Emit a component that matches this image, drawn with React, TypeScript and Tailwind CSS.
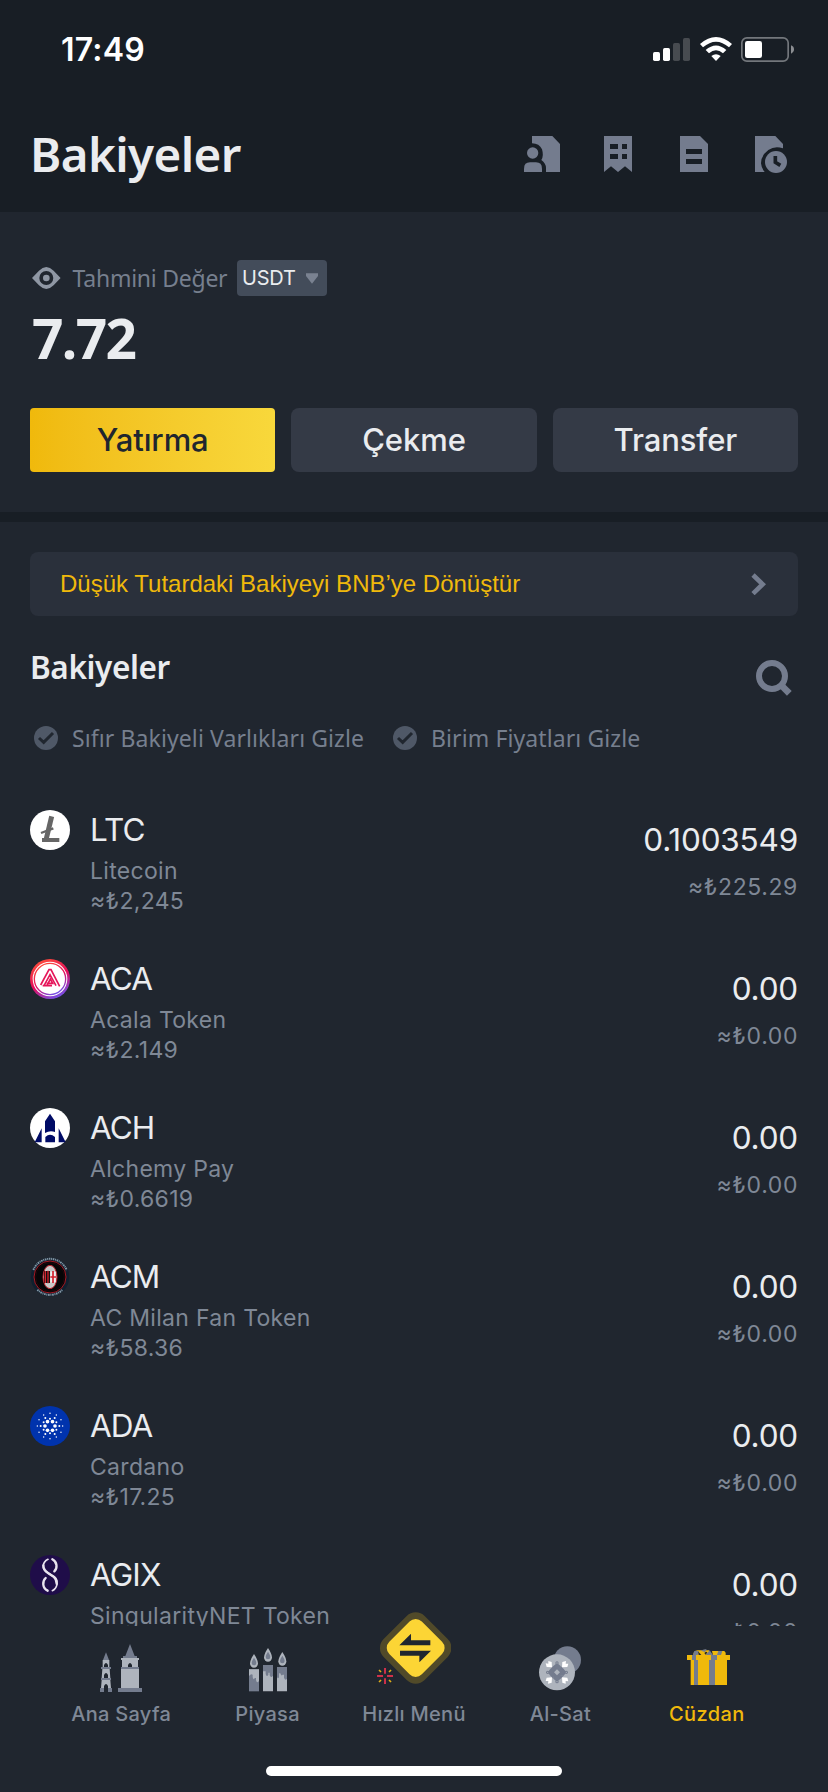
import type { ReactNode } from 'react'

type Coin = {
  symbol: string
  name: string
  price?: string
  amount: string
  value: string
  logo: ReactNode
}

const LtcLogo = () => (
  <svg viewBox="0 0 120 120" className="h-10 w-10">
    <circle cx="60" cy="60" r="60" fill="#fff" />
    <path d="M65 19 L48 90" stroke="#666" strokeWidth="15" />
    <path d="M36 90 H88" stroke="#666" strokeWidth="12" />
    <path d="M33 69 L70 55" stroke="#666" strokeWidth="7" />
  </svg>
)

const AcaLogo = () => (
  <svg viewBox="0 0 120 120" className="h-10 w-10">
    <defs>
      <linearGradient id="aca" x1="0.3" y1="0" x2="0.8" y2="1">
        <stop offset="0" stopColor="#ff4c3b" />
        <stop offset="0.5" stopColor="#e40c5b" />
        <stop offset="1" stopColor="#645aff" />
      </linearGradient>
    </defs>
    <circle cx="60" cy="60" r="60" fill="url(#aca)" />
    <circle cx="60" cy="60" r="52" fill="#fff" />
    <circle cx="60" cy="60" r="47" fill="none" stroke="url(#aca)" strokeWidth="4" />
    <path
      d="M32 78 L57 32 L63 32 L89 82 M42 80 L60 47 L78 80 M51 79 L61 60 L68 73 L50 73 M38 80 H66"
      fill="none"
      stroke="#e5175a"
      strokeWidth="5"
    />
  </svg>
)

const AchLogo = () => (
  <svg viewBox="0 0 120 120" className="h-10 w-10">
    <circle cx="60" cy="60" r="60" fill="#fff" />
    <path d="M60 17 L75 40 V72 Q60 66 45 75 V40 Z" fill="#000b66" />
    <path d="M35 61 V103 H14 Z M86 61 V103 H107 Z" fill="#000b66" />
    <path d="M46 103 V87 Q60 74 75 87 V103 Z" fill="#000b66" />
  </svg>
)

const AcmLogo = () => (
  <svg viewBox="0 0 120 120" className="h-10 w-10">
    <circle cx="60" cy="60" r="58" fill="#10202f" />
    <circle cx="60" cy="60" r="48" fill="#050507" stroke="#a81823" strokeWidth="3" />
    <circle cx="60" cy="60" r="43" fill="none" stroke="#4a0d13" strokeWidth="1" />
    <path d="M10 39 A54 54 0 0 1 110 39" fill="none" stroke="#8395a3" strokeWidth="6" strokeDasharray="5 2 3 2" />
    <path d="M22 98 A54 54 0 0 0 98 98" fill="none" stroke="#8395a3" strokeWidth="6" strokeDasharray="5 2 3 2" />
    <ellipse cx="60" cy="60" rx="21" ry="35" fill="#c9c9c9" stroke="#c3202b" strokeWidth="3" />
    <path d="M42 42 H60 V78 H42 Z" fill="#111" />
    <path d="M46 42 V78 M54 41 V79" stroke="#d51f2c" strokeWidth="4" />
    <path d="M61 44 H77 V76 H61 Z" fill="#eee" />
    <path d="M69 42 V78 M61 60 H78" stroke="#d51f2c" strokeWidth="5" />
  </svg>
)

// dots on concentric rings: radius, dot size, count, start angle
const adaRings = [
  [15, 5.5, 6, 0],
  [22, 3, 6, 30],
  [28, 3, 6, 0],
  [38, 2.2, 12, 0],
]

const AdaLogo = () => (
  <svg viewBox="0 0 120 120" className="h-10 w-10">
    <circle cx="60" cy="60" r="60" fill="#0033ad" />
    {adaRings.map(([r, size, count, start], ring) =>
      Array(count)
        .fill('')
        .map((_, i) => {
          const a = ((start + (i * 360) / count) * Math.PI) / 180
          return (
            <circle key={`${ring}-${i}`} cx={60 + r * Math.cos(a)} cy={60 + r * Math.sin(a)} r={size} fill="#fff" />
          )
        }),
    )}
  </svg>
)

const AgixLogo = () => (
  <svg viewBox="0 0 120 120" className="h-10 w-10">
    <circle cx="60" cy="60" r="60" fill="#1f0d49" />
    <g fill="none" stroke="#e9e4ee" strokeLinecap="round">
      <path d="M54 13 C36 22 36 42 49 51 L72 65 C86 75 84 98 67 107" strokeWidth="5" />
      <path d="M40 31 C40 43 45 48 54 54 L72 66 C79 72 80 78 80 86" strokeWidth="7" />
      <path d="M67 13 C82 21 83 39 73 49" strokeWidth="7" />
      <path d="M47 69 C36 79 37 99 53 107" strokeWidth="7" />
    </g>
  </svg>
)

const coins: Coin[] = [
  { symbol: 'LTC', name: 'Litecoin', price: '≈₺2,245', amount: '0.1003549', value: '≈₺225.29', logo: <LtcLogo /> },
  { symbol: 'ACA', name: 'Acala Token', price: '≈₺2.149', amount: '0.00', value: '≈₺0.00', logo: <AcaLogo /> },
  { symbol: 'ACH', name: 'Alchemy Pay', price: '≈₺0.6619', amount: '0.00', value: '≈₺0.00', logo: <AchLogo /> },
  { symbol: 'ACM', name: 'AC Milan Fan Token', price: '≈₺58.36', amount: '0.00', value: '≈₺0.00', logo: <AcmLogo /> },
  { symbol: 'ADA', name: 'Cardano', price: '≈₺17.25', amount: '0.00', value: '≈₺0.00', logo: <AdaLogo /> },
  { symbol: 'AGIX', name: 'SingularityNET Token', amount: '0.00', value: '≈₺0.00', logo: <AgixLogo /> },
]

const StatusBar = () => (
  <div className="flex h-[100px] items-start justify-between pl-[61px] pr-[34px]">
    <span className="mt-[30px] text-[32px] font-semibold leading-[40px] tracking-[0.2px] text-white">17:49</span>
    <div className="mt-[37px] flex">
      {/* Signal */}
      <svg viewBox="0 0 111 75" className="h-[25px] w-[37px]">
        <rect x="0" y="45" width="21" height="27" rx="5" fill="#fff" />
        <rect x="30" y="33" width="21" height="39" rx="5" fill="#fff" />
        <rect x="60" y="18" width="21" height="54" rx="5" fill="#474b50" />
        <rect x="90" y="3" width="21" height="69" rx="5" fill="#474b50" />
      </svg>
      {/* Wifi */}
      <svg viewBox="0 0 96 75" className="ml-[9.5px] h-[25px] w-8">
        <path d="M0 21 Q48 -21 96 21 L87 31 Q48 -3 9 31 Z" fill="#fff" />
        <path d="M17 39 Q48 12 79 39 L69 49 Q48 31 27 49 Z" fill="#fff" />
        <path d="M34 57 Q48 47 62 57 L48 72 Z" fill="#fff" />
      </svg>
      {/* Battery */}
      <svg viewBox="0 0 159 75" className="ml-[9.5px] h-[25px] w-[53px]">
        <rect x="2.5" y="2.5" width="139" height="70" rx="15" fill="none" stroke="#73777c" strokeWidth="5" />
        <rect x="12" y="12" width="51" height="51" rx="7" fill="#fff" />
        <path d="M150 25 Q159 28 159 37 Q159 46 150 50 Z" fill="#8b8e92" />
      </svg>
    </div>
  </div>
)

const Header = () => (
  <header className="h-[212px] shrink-0 bg-[#181e25]">
    <StatusBar />
    <div className="flex h-[108px] items-center justify-between pl-[30px] pr-[41px]">
      <h1 className="font-['Noto_Sans',sans-serif] text-[47.5px] font-semibold leading-[60px] tracking-[-0.6px] text-[#eaecef]">
        Bakiyeler
      </h1>
      <div className="flex gap-[44px]">
        <svg viewBox="0 0 108 111" className="h-[37px] w-9" fill="#747c8e">
          <path d="M24 0 H85 L108 24 V108 H66 V96 Q66 82 52 72 Q60 60 54 40 Q46 22 24 22 Z" />
          <circle cx="26" cy="51" r="17" />
          <path d="M0 108 V98 Q0 79 18 79 H36 Q54 79 54 98 V108 Z" />
        </svg>
        <svg viewBox="0 0 84 111" className="h-[37px] w-7" fill="#747c8e">
          <path
            fillRule="evenodd"
            d="M0 0 H84 V108 L63 91 L42 108 L21 91 L0 108 Z M18 24 V39 H42 V24 Z M54 24 V39 H69 V24 Z M18 54 V69 H42 V54 Z M54 54 V69 H69 V54 Z"
          />
        </svg>
        <svg viewBox="0 0 84 111" className="ml-1 h-[37px] w-7" fill="#747c8e">
          <path fillRule="evenodd" d="M0 0 H60 L84 24 V108 H0 Z M18 39 V54 H66 V39 Z M18 69 V84 H66 V69 Z" />
        </svg>
        <svg viewBox="0 0 96 111" className="ml-[3px] h-[37px] w-8" fill="#747c8e">
          <path d="M0 0 H61 L84 24 V37 Q60 28 40 42 Q18 58 18 82 Q19 97 29 108 H0 Z" />
          <circle cx="63" cy="78" r="33" />
          <path d="M61 60 V79 L76 88" fill="none" stroke="#181e25" strokeWidth="11" />
        </svg>
      </div>
    </div>
  </header>
)

const Summary = () => (
  <section className="h-[300px] shrink-0 px-[30px] pt-12">
    <div className="flex h-9 items-center">
      <svg viewBox="0 0 86 66" className="ml-[2px] h-[22px] w-[28.6px]">
        <path
          fillRule="evenodd"
          fill="#8f97a4"
          d="M0 33 L21 11 Q43 -11 65 11 L86 33 L65 55 Q43 77 21 55 Z M43 12 A21 21 0 1 0 43 54 A21 21 0 1 0 43 12 Z"
        />
        <circle cx="43" cy="33" r="10" fill="#8f97a4" />
      </svg>
      <span className="ml-3 w-[164.4px] whitespace-nowrap font-['Noto_Sans',sans-serif] text-[23px] tracking-[-0.25px] text-[#767f8e]">
        Tahmini Değer
      </span>
      <div className="flex h-9 w-[90px] items-center rounded bg-[#434c5a] pl-[5px]">
        <span className="text-[20px] tracking-[-0.2px] text-[#eaecef]">USDT</span>
        <svg viewBox="0 0 36 33" className="ml-auto mr-[9px] h-[11px] w-3">
          <path d="M0 1 H36 V9 L18 32 L0 9 Z" fill="#7a8291" />
        </svg>
      </div>
    </div>
    <p className="mt-[10px] pl-[2px] font-['Noto_Sans',sans-serif] text-[55px] font-bold leading-[64px] tracking-[-1.6px] text-[#eaecef]">
      7.72
    </p>
    <div className="mt-[38px] grid grid-cols-3 gap-4 text-[31px] font-medium tracking-[-0.1px] text-[#eaecef]">
      <button className="h-16 rounded bg-linear-to-r from-[#f0b90b] to-[#f8d83b] text-[#20262f]">Yatırma</button>
      <button className="h-16 rounded-lg bg-[#343a46]">Çekme</button>
      <button className="h-16 rounded-lg bg-[#343a46]">Transfer</button>
    </div>
  </section>
)

const Filter = ({ label }: { label: string }) => (
  <div className="flex items-center">
    <svg viewBox="0 0 72 72" className="h-6 w-6">
      <circle cx="36" cy="36" r="36" fill="#4f5867" />
      <path d="M15 36 L29 49 L57 21" fill="none" stroke="#20262f" strokeWidth="9" />
    </svg>
    <span className="ml-[14px] whitespace-nowrap font-['Noto_Sans',sans-serif] text-[23px] tracking-[0.1px] text-[#767f8e]">
      {label}
    </span>
  </div>
)

const CoinRow = ({ coin }: { coin: Coin }) => (
  <li className="flex h-[149px] justify-between">
    <div className="flex">
      {coin.logo}
      <div className="ml-[20px] pt-px text-[23px] leading-[30px] tracking-[0.3px] text-[#7f8896]">
        <h3 className="text-[31.5px] leading-[38px] tracking-[-0.9px] text-[#eaecef]">{coin.symbol}</h3>
        <p className="mt-[7px]">{coin.name}</p>
        <p>{coin.price}</p>
      </div>
    </div>
    <div className="pt-[10px] text-right">
      <p className="text-[31.5px] leading-[40px] tracking-[-0.2px] text-[#eaecef]">{coin.amount}</p>
      <p className="mt-3 text-[23px] leading-[30px] tracking-[0.6px] text-[#7f8896]">{coin.value}</p>
    </div>
  </li>
)

const HomeIcon = () => (
  <svg viewBox="183 102 126 144" className="h-12 w-[42px]">
    <path d="M201 127 L210 150 H192 Z M186 171 H216 V177 H186 Z M186 204 H216 V210 H186 Z M183 234 H219 V246 H183 Z" fill="#747c8e" />
    <path d="M191 150 H211 V171 H191 Z M190 177 H212 L214 204 H188 Z M188 210 H214 L216 234 H186 Z" fill="#aeb4bd" />
    <path
      d="M195 171 V165 Q201 153 207 165 V171 Z M195 204 V195 Q201 183 207 195 V204 Z M195 246 V228 Q201 216 207 228 V246 Z"
      fill="#20262f"
    />
    <path d="M273 102 L287 138 H294 V144 H252 V138 H259 Z M246 171 H300 V177 H246 Z M237 234 H309 V246 H237 Z" fill="#747c8e" />
    <path d="M246 144 H300 V150 H297 V171 H249 V150 H246 Z M246 177 H300 V234 H246 Z" fill="#aeb4bd" />
    <path d="M267 171 V165 Q273 153 279 165 V171 Z" fill="#20262f" />
  </svg>
)

const MarketIcon = () => (
  <svg viewBox="624 102 114 144" className="h-12 w-[38px]">
    {[
      [639, 132],
      [681, 114],
      [724, 126],
    ].map(([x, y]) => (
      <g key={x} transform={`translate(${x} ${y})`}>
        <path d="M0 0 Q12 18 12 28 A12 13 0 0 1 -12 28 Q-12 18 0 0 Z" fill="#aeb4bd" />
        <path d="M0 11 Q7 21 7 27 A7 7 0 0 1 -7 27 Q-7 21 0 11 Z" fill="#747c8e" />
      </g>
    ))}
    <path d="M624 178 H654 V244 H624 Z" fill="#747c8e" />
    <path d="M624 178 H654 V212 Q648 222 645 210 V204 H641 Q638 212 635 202 V194 Q630 190 624 198 Z" fill="#aeb4bd" />
    <path d="M666 165 H696 V244 H666 Z M708 171 H738 V244 H708 Z" fill="#aeb4bd" />
    <path d="M666 165 H696 V197 Q690 206 686 196 V188 H682 V194 Q677 203 674 192 V184 H666 Z" fill="#747c8e" />
    <path d="M708 171 H738 V206 Q733 214 729 203 V194 H725 Q721 200 718 190 H714 V202 Q710 208 708 200 Z" fill="#747c8e" />
  </svg>
)

const QuickMenuIcon = () => (
  <svg viewBox="108 36 224 217" className="h-[72.3px] w-[74.7px]">
    <g transform="rotate(45 224 144)">
      <rect x="137" y="57" width="174" height="174" rx="38" fill="#514a29" />
      <rect x="155" y="75" width="138" height="138" rx="26" fill="#fcd535" />
    </g>
    <path d="M268 121 V136 H175 L210 101 V121 Z M177 152 H270 L235 187 V167 H177 Z" fill="#20262f" />
    <path d="M132 204 V221 M132 235 V252 M108 228 H126 M138 228 H156" stroke="#cf304a" strokeWidth="6" />
    <path d="M114 210 L120 216 M150 210 L144 216 M114 246 L120 240 M150 246 L144 240" stroke="#e0ad18" strokeWidth="5" />
  </svg>
)

const TradeIcon = () => (
  <svg viewBox="594 137 126 135" className="h-[45px] w-[42px]">
    <circle cx="679" cy="179" r="41" fill="#747c8e" />
    <circle cx="648" cy="216" r="54" fill="#aeb4bd" />
    {[0, 90, 180, 270].map((angle) => (
      <g key={angle} transform={`translate(648 216) rotate(${angle})`}>
        <path d="M-10 0 V-20 L0 -28 L10 -20 V0 Z" fill="#747c8e" />
        <circle cx="0" cy="-28" r="5" fill="#747c8e" />
        <circle cx="0" cy="-28" r="2" fill="#aeb4bd" />
        <path d="M-15 -15 L-31 -16 L-34 -27 L-26 -26 L-26 -34 L-16 -31 Z" fill="#fff" />
        <path d="M-20 -10 L-10 -20 L0 -8 Z" fill="#747c8e" />
      </g>
    ))}
    <path d="M648 207 L657 216 L648 225 L639 216 Z" fill="#aeb4bd" />
  </svg>
)

const WalletIcon = () => (
  <svg viewBox="318 327 129 108" className="h-9 w-[43px]">
    <path d="M329 358 H438 V435 H329 Z M318 345 H447 V360 H318 Z" fill="#f0b90b" />
    <path d="M339 360 H351 V435 H339 Z M384 360 H402 V435 H384 Z M333 345 H345 V360 H333 Z M390 345 H408 V360 H390 Z" fill="#747c8e" />
    <path d="M337 345 Q337 332 350 331 H384 L390 345 Z" fill="#f0b90b" />
    <path d="M337 345 Q337 332 345 332 L353 334 L350 345 Z M360 332 Q368 326 377 328 L372 336 Z M374 345 L386 331 L396 345 Z" fill="#747c8e" />
    <path d="M351 334 L361 345 H353 Z M375 335 L379 337 L374 344 L370 339 Z" fill="#20262f" />
    <path d="M393 333 H430 Q436 337 434 345 H396 Z" fill="#f0b90b" />
    <path d="M412 333 H424 L420 345 H408 Z" fill="#747c8e" />
  </svg>
)

const tabs = [
  { label: 'Ana Sayfa', icon: <HomeIcon />, className: 'pt-[18px]' },
  { label: 'Piyasa', icon: <MarketIcon />, className: 'pt-[18px]' },
  { label: 'Hızlı Menü', icon: <QuickMenuIcon />, className: '-mt-[14px]' },
  { label: 'Al-Sat', icon: <TradeIcon />, className: 'pt-[20px]' },
  { label: 'Cüzdan', icon: <WalletIcon />, className: 'pt-[23px] pl-[3px]' },
]

const TabBar = () => (
  <nav className="flex h-[166px] shrink-0 flex-col items-center bg-[#20262f]">
    <div className="grid w-[732px] grid-cols-5">
      {tabs.map((tab) => (
        <div key={tab.label} className="flex h-[140px] flex-col items-center">
          <div className="flex h-[74px] items-start">
            <div className={tab.className}>{tab.icon}</div>
          </div>
          <span
            className={
              tab.label === 'Cüzdan'
                ? 'text-[20px] font-medium leading-[28px] tracking-[0.4px] text-[#f0b90b]'
                : 'text-[20px] font-medium leading-[28px] tracking-[0.3px] text-[#7f8896]'
            }
          >
            {tab.label}
          </span>
        </div>
      ))}
    </div>
    <div className="h-[10px] w-[296px] rounded-full bg-white" />
  </nav>
)

const App = () => {
  return (
    <div className="flex h-[1792px] w-[828px] flex-col overflow-hidden bg-[#20262f] font-[Inter,sans-serif]">
      <Header />
      <Summary />
      <div className="h-[10px] shrink-0 bg-[#181e25]" />
      <main className="min-h-0 flex-1 overflow-hidden px-[30px] pt-[30px]">
        <div className="flex h-16 items-center justify-between rounded-lg bg-[#2a303b] pl-[30px] pr-8">
          <span className="font-['Liberation_Sans',sans-serif] text-[24px] text-[#f0b90b]">
            Düşük Tutardaki Bakiyeyi BNB’ye Dönüştür
          </span>
          <svg viewBox="0 0 45 68" className="h-[22.6px] w-[15px]">
            <path d="M6 6 L35 34 L6 62" fill="none" stroke="#747c8e" strokeWidth="14" />
          </svg>
        </div>
        <div className="mt-[30px] flex h-[50px] items-start justify-between">
          <h2 className="mt-px font-['Noto_Sans',sans-serif] text-[31.5px] font-semibold leading-[40px] tracking-[-0.4px] text-[#eaecef]">
            Bakiyeler
          </h2>
          <svg viewBox="0 0 108 108" className="mr-[6px] mt-[14px] h-9 w-9" fill="none" stroke="#747c8e">
            <circle cx="48" cy="48" r="39" strokeWidth="18" />
            <path d="M78 78 L100 100" strokeWidth="20" />
          </svg>
        </div>
        <div className="mt-[30px] flex h-6 items-center pl-1">
          <div className="w-[359px]">
            <Filter label="Sıfır Bakiyeli Varlıkları Gizle" />
          </div>
          <Filter label="Birim Fiyatları Gizle" />
        </div>
        <ul className="mt-[60px]">
          {coins.map((coin) => (
            <CoinRow key={coin.symbol} coin={coin} />
          ))}
        </ul>
      </main>
      <TabBar />
    </div>
  )
}

export default App
